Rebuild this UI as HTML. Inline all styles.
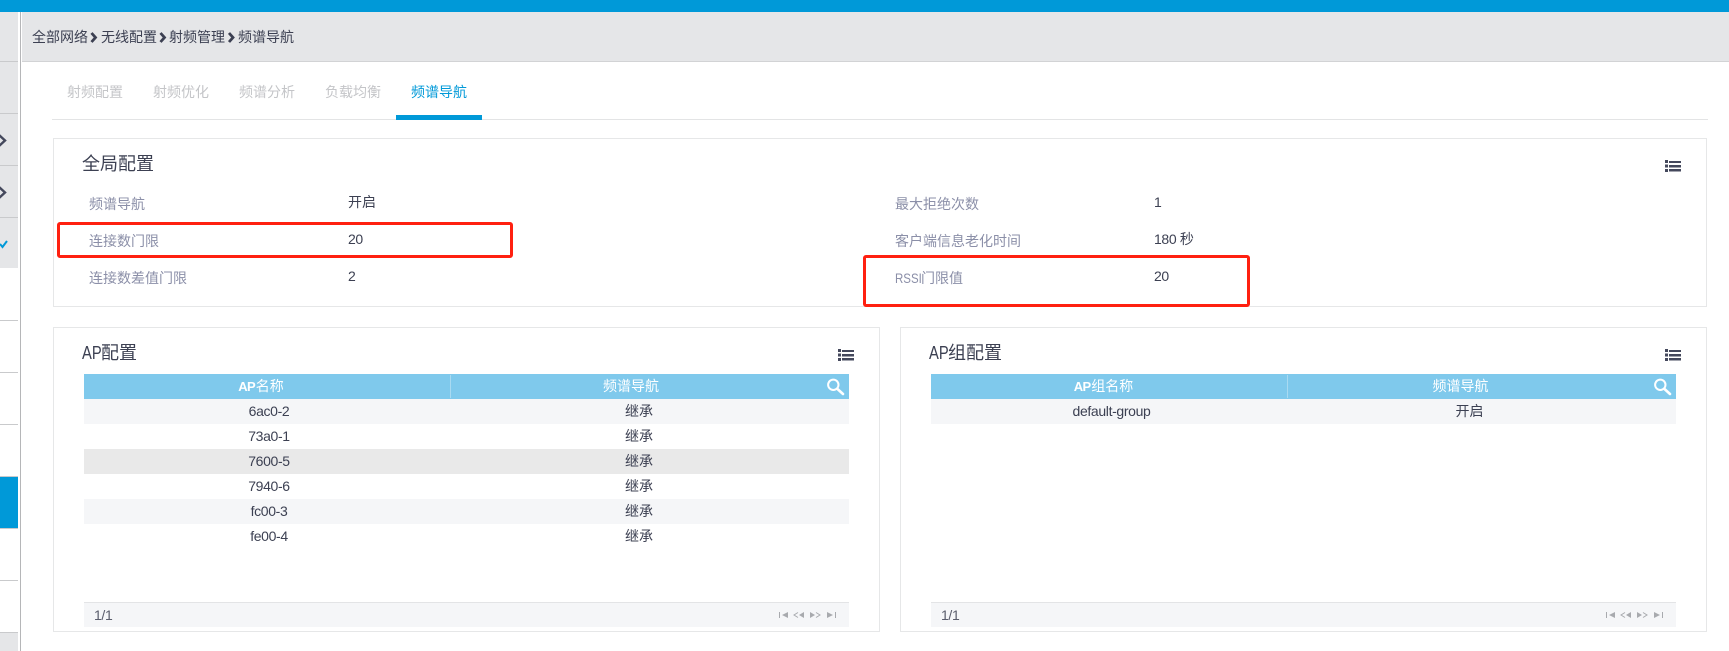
<!DOCTYPE html>
<html lang="zh-CN">
<head>
<meta charset="utf-8">
<title>频谱导航</title>
<style>
html,body{margin:0;padding:0;width:1729px;height:651px;overflow:hidden;background:#fff}
body{position:relative;font-family:"Liberation Sans","Noto Sans CJK SC",sans-serif;font-size:14px;color:#3c4052}
.a{position:absolute}
.t{position:absolute;white-space:nowrap;line-height:20px;height:20px}
.c{transform:translateX(-50%)}
.tab{color:#c4c5c8}
.lab{color:#8b8fa8}
.val{color:#3c4052}
.h{font-size:18px;line-height:26px;height:26px;color:#3c4052}
.h .ap{display:inline-block;width:19px;transform:scaleX(.82);transform-origin:0 50%}
.card{position:absolute;box-sizing:border-box;border:1px solid #e6e7e8;background:#fff}
.th{color:#fff;font-weight:400}
.th b{font-size:13px;letter-spacing:-.6px;margin-right:.6px}
.num{letter-spacing:-.35px}
.rs{display:inline-block;width:26px;transform:scaleX(.82);transform-origin:0 50%;letter-spacing:0}
svg{position:absolute;overflow:visible}
.red{position:absolute;box-sizing:border-box;border:3px solid #ff2010;border-radius:3px}
</style>
</head>
<body>
<!-- top bar -->
<div class="a" style="left:0;top:0;width:1729px;height:12px;background:#0099d8"></div>

<!-- sidebar -->
<div class="a" style="left:0;top:12px;width:18px;height:256px;background:#e5e6e8"></div>
<div class="a" style="left:0;top:632px;width:18px;height:19px;background:#e5e6e8"></div>
<div class="a" style="left:0;top:477px;width:18px;height:51px;background:#0099d8"></div>
<div class="a" style="left:0;top:61px;width:18px;height:1px;background:#c9cacc"></div>
<div class="a" style="left:0;top:113px;width:18px;height:1px;background:#c9cacc"></div>
<div class="a" style="left:0;top:165px;width:18px;height:1px;background:#c9cacc"></div>
<div class="a" style="left:0;top:217px;width:18px;height:1px;background:#c9cacc"></div>
<div class="a" style="left:0;top:320px;width:18px;height:1px;background:#c9cacc"></div>
<div class="a" style="left:0;top:372px;width:18px;height:1px;background:#c9cacc"></div>
<div class="a" style="left:0;top:424px;width:18px;height:1px;background:#c9cacc"></div>
<div class="a" style="left:0;top:476px;width:18px;height:1px;background:#c9cacc"></div>
<div class="a" style="left:0;top:528px;width:18px;height:1px;background:#c9cacc"></div>
<div class="a" style="left:0;top:580px;width:18px;height:1px;background:#c9cacc"></div>
<div class="a" style="left:0;top:632px;width:18px;height:1px;background:#c9cacc"></div>
<svg style="left:0;top:0" width="20" height="260"><path d="M-1 135L5 140.500L-1 146" fill="none" stroke="#44485c" stroke-width="2.400"/><path d="M-1 187L5 192.500L-1 198" fill="none" stroke="#44485c" stroke-width="2.400"/><path d="M0 244L2.500 247L7 241" fill="none" stroke="#0099d8" stroke-width="2"/></svg>
<div class="a" style="left:20px;top:12px;width:1px;height:639px;background:#b5b6b8"></div>

<!-- breadcrumb -->
<div class="a" style="left:22px;top:12px;width:1707px;height:49px;background:#e5e6e8"></div>
<div class="a" style="left:22px;top:61px;width:1707px;height:1px;background:#d2d3d5"></div>
<div class="t" style="left:32px;top:27px">全部网络</div>
<div class="t" style="left:101px;top:27px">无线配置</div>
<div class="t" style="left:169px;top:27px">射频管理</div>
<div class="t" style="left:238px;top:27px">频谱导航</div>
<svg style="left:0;top:0" width="300" height="60"><g fill="none" stroke="#3c4052" stroke-width="2.800"><path d="M91.500 33L95.500 37.500L91.500 42"/><path d="M160.500 33L164.500 37.500L160.500 42"/><path d="M229 33L233 37.500L229 42"/></g></svg>

<!-- tabs -->
<div class="t tab" style="left:67px;top:82px">射频配置</div>
<div class="t tab" style="left:153px;top:82px">射频优化</div>
<div class="t tab" style="left:239px;top:82px">频谱分析</div>
<div class="t tab" style="left:325px;top:82px">负载均衡</div>
<div class="t" style="left:411px;top:82px;color:#0099d8">频谱导航</div>
<div class="a" style="left:52px;top:119px;width:1656px;height:1px;background:#e3e4e5"></div>
<div class="a" style="left:396px;top:115px;width:86px;height:5px;background:#0099d8"></div>

<!-- global card -->
<div class="card" style="left:53px;top:138px;width:1654px;height:169px"></div>
<div class="t h" style="left:82px;top:151px">全局配置</div>
<div class="t lab" style="left:89px;top:194px">频谱导航</div>
<div class="t val" style="left:348px;top:192px">开启</div>
<div class="t lab" style="left:89px;top:231px">连接数门限</div>
<div class="t val num" style="left:348px;top:229px">20</div>
<div class="t lab" style="left:89px;top:268px">连接数差值门限</div>
<div class="t val num" style="left:348px;top:266px">2</div>
<div class="t lab" style="left:895px;top:194px">最大拒绝次数</div>
<div class="t val num" style="left:1154px;top:192px">1</div>
<div class="t lab" style="left:895px;top:231px">客户端信息老化时间</div>
<div class="t val num" style="left:1154px;top:229px">180 秒</div>
<div class="t lab" style="left:895px;top:268px"><span class="rs">RSSI</span>门限值</div>
<div class="t val num" style="left:1154px;top:266px">20</div>
<svg style="left:1665px;top:160px" width="16" height="12"><path d="M0 0h3v3H0zM0 4.500h3v3H0zM0 9h3v3H0zM4 1h12v2H4zM4 5h12v2.500H4zM4 9h12v2.500H4z" fill="#44485c"/></svg>

<!-- AP card -->
<div class="card" style="left:53px;top:327px;width:827px;height:305px"></div>
<div class="t h" style="left:82px;top:340px"><span class="ap">AP</span>配置</div>
<svg style="left:838px;top:349px" width="16" height="12"><path d="M0 0h3v3H0zM0 4.500h3v3H0zM0 9h3v3H0zM4 1h12v2H4zM4 5h12v2.500H4zM4 9h12v2.500H4z" fill="#44485c"/></svg>
<div class="a" style="left:84px;top:374px;width:765px;height:25px;background:#7fc9ec"></div>
<div class="a" style="left:450px;top:375px;width:1px;height:23px;background:#a9daf1"></div>
<div class="t th c" style="left:261px;top:376px"><b>AP</b>名称</div>
<div class="t th c" style="left:631px;top:376px">频谱导航</div>
<svg style="left:827px;top:378px" width="18" height="18"><circle cx="6.300" cy="6.800" r="5.200" fill="none" stroke="#fff" stroke-width="2"/><path d="M10.500 11L16 16" stroke="#fff" stroke-width="2.600" stroke-linecap="round"/></svg>
<div class="a" style="left:84px;top:399px;width:765px;height:25px;background:#f5f6f8"></div>
<div class="a" style="left:84px;top:449px;width:765px;height:25px;background:#e9e9e9"></div>
<div class="a" style="left:84px;top:499px;width:765px;height:25px;background:#f5f6f8"></div>
<div class="t c num" style="left:269px;top:401px">6ac0-2</div><div class="t c" style="left:639px;top:401px">继承</div>
<div class="t c num" style="left:269px;top:426px">73a0-1</div><div class="t c" style="left:639px;top:426px">继承</div>
<div class="t c num" style="left:269px;top:451px">7600-5</div><div class="t c" style="left:639px;top:451px">继承</div>
<div class="t c num" style="left:269px;top:476px">7940-6</div><div class="t c" style="left:639px;top:476px">继承</div>
<div class="t c num" style="left:269px;top:501px">fc00-3</div><div class="t c" style="left:639px;top:501px">继承</div>
<div class="t c num" style="left:269px;top:526px">fe00-4</div><div class="t c" style="left:639px;top:526px">继承</div>
<div class="a" style="left:84px;top:602px;width:765px;height:25px;box-sizing:border-box;border-top:1px solid #e3e4e6;background:#f5f6f8"></div>
<div class="t num" style="left:94px;top:605px;color:#5a5d6c">1/1</div>
<svg style="left:779px;top:612px" width="58" height="7"><g fill="#a8aaae"><path d="M0 0h1v6H0zM9 0v6L3 3z"/><path d="M25 0v6l-5-3z"/><path d="M31 0v6l5-3z"/><path d="M48 0v6l6-3zM56 0h1v6h-1z"/></g><g fill="none" stroke="#a8aaae"><path d="M19 .5L15 3l4 2.500"/><path d="M37 .5L41 3l-4 2.500"/></g></svg>

<!-- AP group card -->
<div class="card" style="left:900px;top:327px;width:807px;height:305px"></div>
<div class="t h" style="left:929px;top:340px"><span class="ap">AP</span>组配置</div>
<svg style="left:1665px;top:349px" width="16" height="12"><path d="M0 0h3v3H0zM0 4.500h3v3H0zM0 9h3v3H0zM4 1h12v2H4zM4 5h12v2.500H4zM4 9h12v2.500H4z" fill="#44485c"/></svg>
<div class="a" style="left:931px;top:374px;width:745px;height:25px;background:#7fc9ec"></div>
<div class="a" style="left:1287px;top:375px;width:1px;height:23px;background:#a9daf1"></div>
<div class="t th c" style="left:1103.500px;top:376px"><b>AP</b>组名称</div>
<div class="t th c" style="left:1460.500px;top:376px">频谱导航</div>
<svg style="left:1654px;top:378px" width="18" height="18"><circle cx="6.300" cy="6.800" r="5.200" fill="none" stroke="#fff" stroke-width="2"/><path d="M10.500 11L16 16" stroke="#fff" stroke-width="2.600" stroke-linecap="round"/></svg>
<div class="a" style="left:931px;top:399px;width:745px;height:25px;background:#f5f6f8"></div>
<div class="t c num" style="left:1111.500px;top:401px">default-group</div>
<div class="t c" style="left:1469.500px;top:401px">开启</div>
<div class="a" style="left:931px;top:602px;width:745px;height:25px;box-sizing:border-box;border-top:1px solid #e3e4e6;background:#f5f6f8"></div>
<div class="t num" style="left:941px;top:605px;color:#5a5d6c">1/1</div>
<svg style="left:1606px;top:612px" width="58" height="7"><g fill="#a8aaae"><path d="M0 0h1v6H0zM9 0v6L3 3z"/><path d="M25 0v6l-5-3z"/><path d="M31 0v6l5-3z"/><path d="M48 0v6l6-3zM56 0h1v6h-1z"/></g><g fill="none" stroke="#a8aaae"><path d="M19 .5L15 3l4 2.500"/><path d="M37 .5L41 3l-4 2.500"/></g></svg>

<!-- red annotation boxes -->
<div class="red" style="left:57px;top:222px;width:456px;height:36px"></div>
<div class="red" style="left:863px;top:255px;width:387px;height:52px"></div>
</body>
</html>
